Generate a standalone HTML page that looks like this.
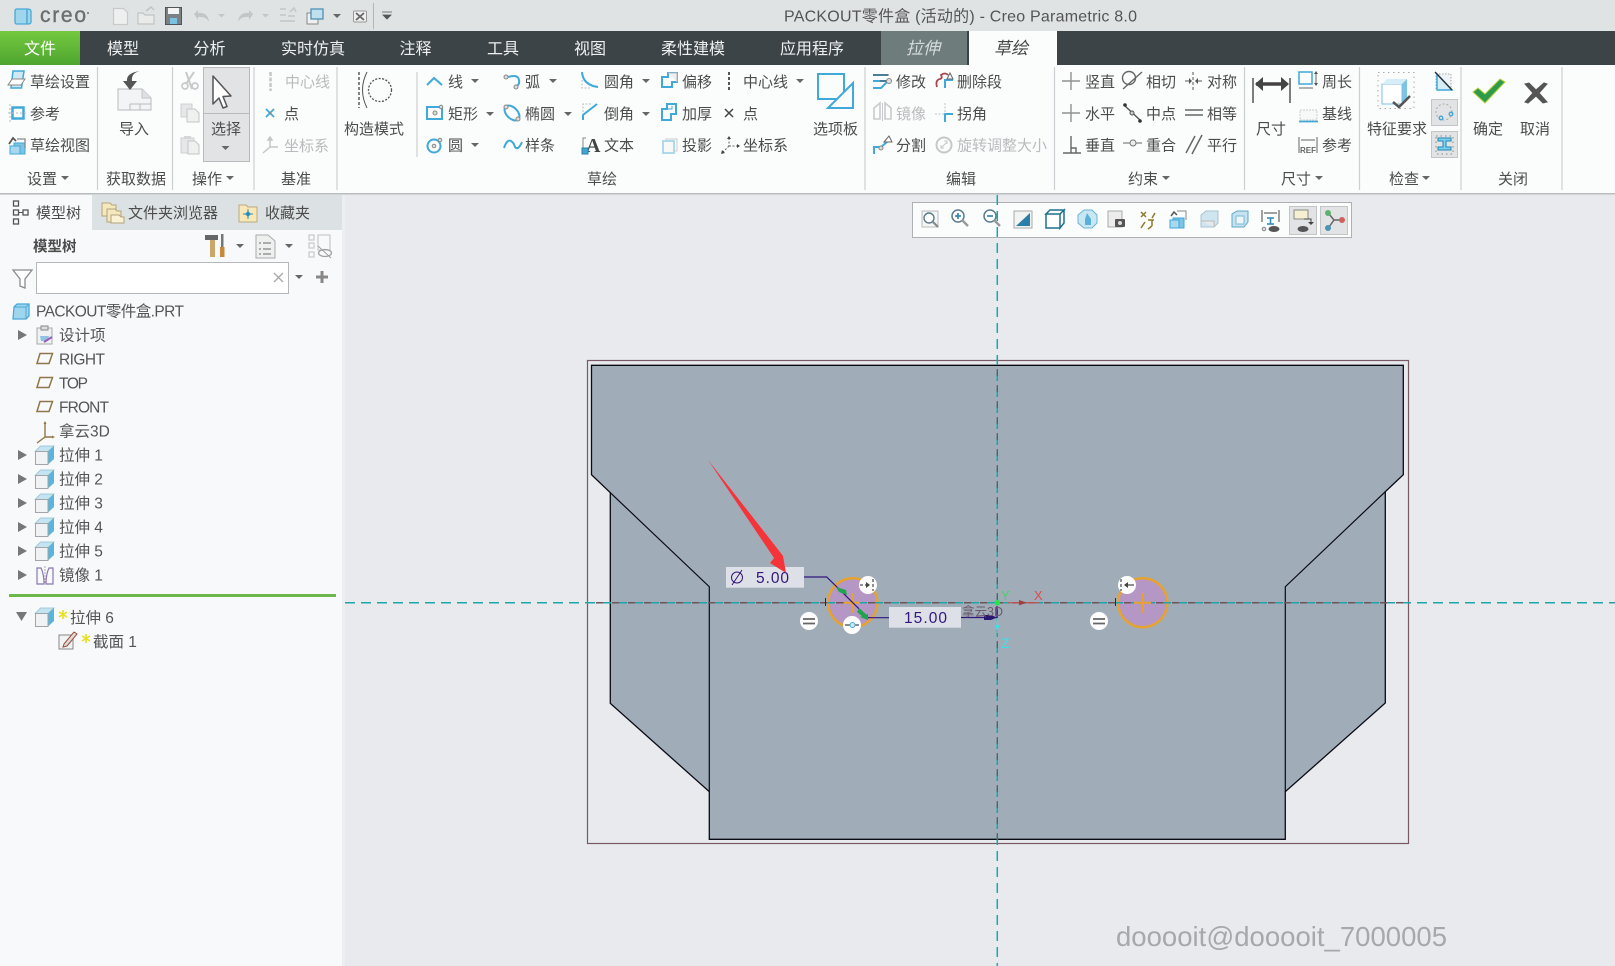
<!DOCTYPE html>
<html lang="zh"><head><meta charset="utf-8"><title>PACKOUT零件盒 (活动的) - Creo Parametric 8.0</title>
<style>
html,body{margin:0;padding:0;width:1615px;height:966px;overflow:hidden;background:#e8eaee}
svg{display:block}
text{font-family:"Liberation Sans","Noto Sans CJK SC",sans-serif;font-size:15px;fill:#4c4c4c}
.g{fill:#b9bcbd}
.tab{font-size:16px;fill:#eef0f0}
.tr{font-size:15.5px;fill:#555}
.dim{font-family:"Liberation Sans",sans-serif;font-size:15.5px;fill:#34157e}
.b{fill:none;stroke:#41a9d9;stroke-width:2}
.k{fill:none;stroke:#666;stroke-width:1.4}
.l{fill:none;stroke:#c4c6c7;stroke-width:1.4}
</style></head><body>
<svg xmlns="http://www.w3.org/2000/svg" width="1615" height="966" viewBox="0 0 1615 966">
<defs>
<linearGradient id="gr" x1="0" y1="0" x2="0" y2="1"><stop offset="0" stop-color="#74c93f"/><stop offset="1" stop-color="#4ea52f"/></linearGradient>
<g id="cube"><path d="M0 5.5L5.500 0H19L13 5.500Z" fill="#c4e4f1" stroke="#8fbcd0" stroke-width=".7"/><path d="M13 5.500L19 0V13L13 18.500Z" fill="#5ab4dc"/><rect x=".5" y="5.500" width="12.500" height="13" fill="#f1f2f3" stroke="#a2a4a6"/></g>
<path id="plane" d="M2 10.500L5 .5H17.500L14 10.500Z" fill="none" stroke="#8f7748" stroke-width="1.500"/>
</defs>

<!-- backgrounds -->
<rect width="1615" height="966" fill="#e8eaee"/>
<rect width="1615" height="31" fill="#dfe3e3"/>
<rect y="31" width="1615" height="34" fill="#3c4447"/>
<rect y="31" width="80" height="34" fill="url(#gr)"/>
<rect x="881" y="31" width="86" height="34" fill="#6f7c7c"/>
<rect x="969" y="31" width="88" height="34" fill="#fbfcfc"/>
<rect y="65" width="1615" height="128" fill="#fbfcfc"/>
<rect y="193" width="1615" height="1.500" fill="#b9bdbf"/>

<!-- title bar -->
<path d="M17 9h11q3 0 3 3v10q0 2-3 2H17q-2 0-2-2V11q0-2 2-2z" fill="#9fd6ee" stroke="#4aa9d6" stroke-width="1.300"/>
<path d="M27 9v15" stroke="#4aa9d6" stroke-width="1.500"/>
<text x="40" y="22" style="font-size:21px;fill:#6a7072;stroke:#6a7072;stroke-width:.4" textLength="46">creo</text>
<circle cx="88" cy="13" r="1" fill="#6a7072"/>
<path d="M113.500 8.500h10l4 4v12h-14z" fill="#eef0f0" stroke="#c7c9ca" stroke-width="1.200"/>
<path d="M138 13h5l2 2h9v9h-16z" fill="#e9ebeb" stroke="#c2c4c4" stroke-width="1.200"/><path d="M146 11l5-4 3 3" fill="none" stroke="#c2c4c4" stroke-width="1.500"/>
<rect x="165.500" y="7.500" width="16" height="17" fill="#7a8084" stroke="#4f5558"/><rect x="168" y="8" width="11" height="6" fill="#f4f4f4"/><rect x="170" y="18" width="7" height="6" fill="#7cc0e2"/>
<path d="M194 14l4-4v3q10-1 11 9q-3-6-11-5v3z" fill="#c3c6c7"/>
<path d="M253 14l-4-4v3q-10-1-11 9q3-6 11-5v3z" fill="#c3c6c7"/>
<path d="M280 9h6M280 15h6M280 21h15M290 12l4-4 2 4M288 16h7" stroke="#c7cacb" stroke-width="1.700" fill="none"/>
<rect x="307" y="13" width="11" height="11" fill="#eef0f0" stroke="#888"/><rect x="311" y="9" width="12" height="10" fill="#bfe0ef" stroke="#4f91b4" stroke-width="1.300"/>
<rect x="353.500" y="11" width="13" height="11" rx="1" fill="#eee" stroke="#999"/><path d="M356 13l8 7M364 13l-8 7" stroke="#666" stroke-width="1.800"/>
<path d="M373.500 3v26" stroke="#b3b6b7"/>
<path d="M382 12h10M383 15h8l-4 4z" fill="#555" stroke="#555" stroke-width=".8"/>
<path d="M218 14h7l-3.500 3.500zM262 14h7l-3.500 3.500z" fill="#c4c6c7"/><path d="M333 14h8l-4 4z" fill="#666"/>
<text x="784" y="21.500" style="font-size:16px;fill:#555" textLength="353">PACKOUT零件盒 (活动的) - Creo Parametric 8.0</text>

<!-- tab labels -->
<text class="tab" x="24" y="54" style="fill:#fff">文件</text>
<text class="tab" x="107" y="54">模型</text><text class="tab" x="193.500" y="54">分析</text>
<text class="tab" x="281" y="54">实时仿真</text><text class="tab" x="399.500" y="54">注释</text>
<text class="tab" x="487" y="54">工具</text><text class="tab" x="574" y="54">视图</text>
<text class="tab" x="661" y="54">柔性建模</text><text class="tab" x="780" y="54">应用程序</text>
<text class="tab" x="906" y="54" style="font-size:17px;font-style:italic;fill:#d5dbdb">拉伸</text>
<text class="tab" x="994" y="54" style="font-size:17px;font-style:italic;fill:#444">草绘</text>

<!-- ribbon separators -->
<path d="M97.500 67v123M172.500 67v123M254 67v123M337 67v123M417 72v85M865 67v123M1054.500 67v123M1244.500 67v123M1359.500 67v123M1461 67v123M1562 67v123" stroke="#cdd0d2" stroke-width="1.200"/>
<rect x="203.500" y="67.500" width="46" height="94" fill="#e2e3e4" stroke="#b8babb"/><path d="M204 113.500h45" stroke="#b8babb"/>

<!-- ribbon text -->
<text x="30" y="87">草绘设置</text><text x="30" y="119">参考</text><text x="30" y="150.500">草绘视图</text><text x="27" y="184">设置</text>
<text x="119" y="134">导入</text><text x="106" y="184">获取数据</text>
<text x="211" y="134">选择</text><text x="192" y="184">操作</text>
<text class="g" x="285" y="87">中心线</text><text x="284" y="119">点</text><text class="g" x="284" y="151">坐标系</text><text x="281" y="184">基准</text>
<text x="344" y="134">构造模式</text>
<text x="448" y="87">线</text><text x="448" y="119">矩形</text><text x="448" y="150.500">圆</text>
<text x="525" y="87">弧</text><text x="525" y="119">椭圆</text><text x="525" y="150.500">样条</text>
<text x="604" y="87">圆角</text><text x="604" y="119">倒角</text><text x="604" y="150.500">文本</text>
<text x="682" y="87">偏移</text><text x="682" y="119">加厚</text><text x="682" y="150.500">投影</text>
<text x="743" y="87">中心线</text><text x="743" y="119">点</text><text x="743" y="150.500">坐标系</text>
<text x="587" y="184">草绘</text><text x="813" y="134">选项板</text>
<text x="896" y="87">修改</text><text class="g" x="896" y="119">镜像</text><text x="896" y="150.500">分割</text>
<text x="957" y="87">删除段</text><text x="957" y="119">拐角</text><text class="g" x="957" y="150.500">旋转调整大小</text><text x="946" y="184">编辑</text>
<text x="1085" y="87">竖直</text><text x="1085" y="119">水平</text><text x="1085" y="150.500">垂直</text>
<text x="1146" y="87">相切</text><text x="1146" y="119">中点</text><text x="1146" y="150.500">重合</text>
<text x="1207" y="87">对称</text><text x="1207" y="119">相等</text><text x="1207" y="150.500">平行</text><text x="1128" y="184">约束</text>
<text x="1256" y="134">尺寸</text><text x="1322" y="87">周长</text><text x="1322" y="119">基线</text><text x="1322" y="150.500">参考</text><text x="1281" y="184">尺寸</text>
<text x="1367" y="134">特征要求</text><text x="1389" y="184">检查</text>
<text x="1473" y="134">确定</text><text x="1520" y="134">取消</text><text x="1498" y="184">关闭</text>

<!-- ribbon dropdown arrows -->
<path d="M61 176h8l-4 4zM221.500 146h8l-4 4zM226 176h8l-4 4zM471 79h8l-4 4zM486 112h8l-4 4zM471 143h8l-4 4zM549 79h8l-4 4zM564 112h8l-4 4zM642 79h8l-4 4zM642 112h8l-4 4zM796 79h8l-4 4zM1162 176h8l-4 4zM1315 176h8l-4 4zM1422 176h8l-4 4z" fill="#666"/>

<!-- settings icons -->
<path d="M13 71h11l-2.500 17H11z" fill="#cfe9f4" stroke="#41a9d9" stroke-width="1.500"/>
<path d="M8 85l4-6h13l-4 6z" fill="#fff" stroke="#888"/>
<rect x="12.500" y="107.500" width="11" height="11" fill="none" stroke="#41a9d9" stroke-width="2.500"/>
<path d="M8 113h18M10 104v18" stroke="#bbb" stroke-dasharray="2 2"/>
<rect x="14" y="143" width="11" height="11" fill="#7cc4e4" stroke="#41a9d9"/><rect x="10" y="146" width="10" height="8" fill="#a8d8ee" stroke="#41a9d9"/>
<path d="M17 139h8v9" fill="none" stroke="#888" stroke-width="1.300"/><path d="M9 144l4-6 3 3" fill="none" stroke="#555" stroke-width="1.700"/>

<!-- import -->
<path d="M118 89h24l9 9v12h-33z" fill="#f2f4f5" stroke="#c3c6c8" stroke-width="1.200"/><path d="M142 89v9h9" fill="#dde0e2" stroke="#c3c6c8"/>
<path d="M130 104h21M130 104v6M140 104v6" stroke="#bbb"/>
<path d="M140 71q-9 2-8 10h5l-7 9-7-9h4q-1-8 13-10z" fill="#555"/>

<!-- clipboard -->
<path d="M186 72l6 17M194 72l-8 12" stroke="#c8c9ca" stroke-width="2"/><circle cx="185" cy="86" r="3" fill="none" stroke="#c8c9ca" stroke-width="1.700"/><circle cx="195" cy="86" r="3" fill="none" stroke="#c8c9ca" stroke-width="1.700"/>
<rect x="181" y="104" width="11" height="13" fill="#e6e7e8" stroke="#cfd0d1"/><path d="M187 109h8l4 4v9h-12z" fill="#eff0f0" stroke="#c4c5c6"/>
<rect x="181" y="138" width="13" height="15" fill="#e6e7e8" stroke="#cfd0d1"/><rect x="184" y="136" width="7" height="3" fill="#d5d6d7"/><path d="M188 141h7l4 4v9h-11z" fill="#eff0f0" stroke="#c4c5c6"/>
<path d="M213 76l18 20-8 .5 4 10-4 1.500-4-10-6 6z" fill="#fff" stroke="#555" stroke-width="1.500" stroke-linejoin="round"/>

<!-- datum -->
<path d="M270.500 72v19" stroke="#c4c6c7" stroke-width="2.500" stroke-dasharray="4 1.500"/>
<path d="M266 109l8 8M274 109l-8 8" stroke="#41a9d9" stroke-width="1.800"/><circle cx="270" cy="113" r="1.200" fill="#888"/>
<path d="M270 137v10l-7 6M270 147h8M270 137l-2 3h4z" class="l"/>

<!-- construct -->
<path d="M359 72v36" stroke="#444" stroke-dasharray="3 2" stroke-width="1.300"/>
<path d="M367 72q-9 18 0 36" stroke="#555" fill="none"/>
<circle cx="380" cy="90" r="11.500" fill="none" stroke="#555" stroke-dasharray="2 1.500" stroke-width="1.300"/>

<!-- sketch group -->
<path d="M427 85l7-7 8 7" class="b" stroke-width="2.800"/>
<rect x="427" y="107" width="15" height="12" class="b" stroke-width="2.600"/><circle cx="435" cy="113" r="2" fill="#ddd" stroke="#888"/><circle cx="441" cy="107" r="1.700" fill="#ddd" stroke="#888"/>
<circle cx="434" cy="146" r="6.500" class="b" stroke-width="2.600"/><circle cx="434" cy="146" r="1.800" fill="#ddd" stroke="#888"/><circle cx="440" cy="140" r="1.800" fill="#ddd" stroke="#888"/>
<path d="M508 77q10-3 11 3 1 4-3 7" class="b" stroke-width="2.600"/><circle cx="506" cy="77" r="2" fill="#ddd" stroke="#888"/><circle cx="516" cy="87" r="2" fill="#ddd" stroke="#888"/>
<ellipse cx="512" cy="113" rx="9" ry="5.500" transform="rotate(45 512 113)" class="b" stroke-width="2.600"/><circle cx="506" cy="107" r="2" fill="#ddd" stroke="#888"/><circle cx="518" cy="119" r="2" fill="#ddd" stroke="#888"/>
<path d="M504 148q3-9 7-7 3 2 4 6 3 4 7-5" class="b" stroke-width="2.800"/>
<path d="M582 72q1 13 16 15" class="b" stroke-width="2.400"/><path d="M582 80v8h8" stroke="#bbb" stroke-dasharray="2 1.500" fill="none"/>
<path d="M583 120v-5l14-11" class="b" stroke-width="2.400"/><path d="M583 112v-8h8" stroke="#bbb" stroke-dasharray="2 1.500" fill="none"/>
<text x="586" y="152" style="font-family:'Liberation Serif',serif;font-size:20px;font-weight:bold;fill:#444">A</text><path d="M586 138h-3v10" stroke="#888" fill="none"/><rect x="582" y="148" width="6" height="6" fill="#3fa7d6" stroke="#2a7fa8"/>
<path d="M662 87V77h6v-4h9v9h-5v5z" class="b" stroke-width="1.800"/><path d="M668 73h9v9" stroke="#bbb" fill="#eee"/>
<path d="M662 120v-11h5v-5h9v10h-5v6z" class="b" stroke-width="1.800"/><path d="M667 109h5v-3" stroke="#41a9d9" fill="none"/>
<rect x="663" y="141" width="11" height="12" fill="#f7f8f8" stroke="#9bd1ea" stroke-width="1.600"/><path d="M666 141v-2h11v12h-3" stroke="#ccc" fill="none"/>
<path d="M729 72v18" stroke="#444" stroke-width="1.800" stroke-dasharray="3 2"/>
<path d="M725 109l8 8M733 109l-8 8" stroke="#444" stroke-width="1.500"/>
<path d="M729 138v8M729 146h8M729 146l-6 6" stroke="#666" stroke-dasharray="2 1.500" fill="none"/><path d="M727 139l2-3 2 3zM737 144l3 2-3 2zM722 150l-1 4 4-1z" fill="#444"/>
<path d="M818 74h26v25h-26z" fill="none" stroke="#41a9d9" stroke-width="2"/><path d="M828 108l25-25v25z" fill="#fbfcfc" stroke="#41a9d9" stroke-width="2"/>

<!-- edit group -->
<path d="M873 75h15M873 81h15M873 88h8l6-6" class="b" stroke-width="1.600"/><path d="M873 75h16M880 81h10" stroke="#555"/><circle cx="889" cy="81" r="2.500" fill="#ddd" stroke="#888"/>
<path d="M874 108l6-5v16h-6zM891 108l-6-5v16h6z" fill="none" stroke="#c9cbcc" stroke-width="1.600"/><path d="M882.500 103v18" stroke="#c9cbcc"/>
<path d="M874 154v-7h7l6-5" class="b" stroke-width="1.800"/><path d="M884 142l5-6 3 6z" fill="#fff" stroke="#666"/><circle cx="881" cy="148" r="2" fill="#ddd" stroke="#888"/>
<path d="M945 88v-8h8" class="b" stroke-width="2"/><path d="M937 87q-2-7 3-8 3-1 1-4 4-3 7 0" fill="none" stroke="#a9484b" stroke-width="1.800"/><path d="M947 79l3-6 3 6z" fill="#fff" stroke="#666"/>
<path d="M945 122v-8h8" class="b" stroke-width="2"/><path d="M945 103v11M935 114h10" stroke="#c1c1c1" stroke-dasharray="2 1.500"/>
<circle cx="944" cy="145" r="7.500" fill="none" stroke="#c6c8c9" stroke-width="2"/><path d="M941 148l6-6M944 141h3v3M941 145v3h3" stroke="#c6c8c9" fill="none"/>

<!-- constraints -->
<path d="M1062 81h18M1071 72v18" stroke="#8f9192" stroke-width="1.400"/>
<path d="M1062 113h18M1071 104v18" stroke="#8f9192" stroke-width="1.400"/>
<path d="M1063 153h18M1071 136v17M1071 148h5v5" stroke="#666" stroke-width="1.400" fill="none"/>
<circle cx="1129" cy="78" r="6.500" class="k"/><path d="M1123 89l19-17" class="k"/>
<path d="M1124 105l17 16" stroke="#555" stroke-width="1.500"/><circle cx="1125" cy="105" r="1.800" fill="#333"/><circle cx="1132" cy="113" r="2" fill="#ccc" stroke="#555"/><circle cx="1140" cy="121" r="1.800" fill="#333"/>
<path d="M1123 143h19" stroke="#666"/><circle cx="1133" cy="143" r="3" fill="#eee" stroke="#777"/>
<path d="M1193 72v18" stroke="#555" stroke-dasharray="3 2"/><path d="M1185 81h5M1197 81h5" stroke="#555"/><path d="M1189 78l3 3-3 3zM1198 78l-3 3 3 3z" fill="#555"/>
<path d="M1185 110h18M1185 115h18" stroke="#666" stroke-width="1.500"/>
<path d="M1186 153l9-17M1192 154l10-19" stroke="#666" stroke-width="1.500"/>

<!-- dimension -->
<path d="M1253 78v25M1290 78v25" stroke="#555" stroke-width="1.500"/>
<path d="M1256 84h31" stroke="#444" stroke-width="3.500"/><path d="M1255 84l8-7v14zM1289 84l-8-7v14z" fill="#444"/>
<rect x="1299" y="72" width="13" height="12" fill="none" stroke="#41a9d9" stroke-width="1.500"/><path d="M1316 73v11M1299 88h14" stroke="#666"/><path d="M1314 74h4l-2-3zM1314 83h4l-2 3z" fill="#555"/>
<rect x="1300" y="110" width="17" height="10" fill="#f7f8f8" stroke="#ccc" stroke-dasharray="2 1"/><path d="M1299 121.500h19" stroke="#41a9d9" stroke-width="1.800"/>
<path d="M1299 137v16M1317 137v16M1301 140h14" stroke="#666"/><text x="1300" y="153" style="font-size:8px;font-weight:bold;fill:#666">REF</text>

<!-- inspect -->
<rect x="1378" y="72.500" width="36" height="36" fill="none" stroke="#aaa" stroke-dasharray="1.500 3.500"/>
<path d="M1382 84h20v20h-20z" fill="#fff" stroke="#7bbfe0"/><path d="M1382 84l5-5h20l-5 5z" fill="#d7eef8"/><path d="M1402 84l5-5v20l-5 5z" fill="#7cc4e4"/>
<path d="M1393 102l6 5 11-11" fill="none" stroke="#555" stroke-width="2.500"/>
<rect x="1436" y="74" width="15" height="15" fill="#eef4f8" stroke="#aaa" stroke-dasharray="1.500 1.500"/><path d="M1437 74l15 16h-15z" fill="#d6edf8" stroke="#41a9d9" stroke-width="1.500"/><path d="M1435 72l17 18" stroke="#333" stroke-width="1.400"/>
<rect x="1431.500" y="99.500" width="26" height="26" fill="#e2e3e4" stroke="#c4c5c6"/><circle cx="1444" cy="112" r="8" fill="none" stroke="#aaa" stroke-dasharray="2 2"/><circle cx="1441" cy="118" r="1.800" fill="none" stroke="#3fa7d6" stroke-width="1.300"/><circle cx="1451" cy="114" r="1.800" fill="none" stroke="#3fa7d6" stroke-width="1.300"/>
<rect x="1431.500" y="131.500" width="26" height="26" fill="#e2e3e4" stroke="#c4c5c6"/><path d="M1438 138h13v3h-5v6h5v3h-13v-3h5v-6h-5z" fill="#7fd0ee" stroke="#1c86b4"/><path d="M1436 136h17v18h-17z" fill="none" stroke="#888" stroke-dasharray="1.500 3"/>

<!-- close -->
<path d="M1473 92l5-4 7 6 15-15 5 3-20 21z" fill="#2f9a4a" stroke="#b8d33c" stroke-width="1"/>
<path d="M1525 84l4-1 7 7 8-7 3 1-8 9 8 9-4 1-7-7-8 7-3-1 8-9z" fill="#555" stroke="#555"/>

<!-- view toolbar -->
<rect x="912.500" y="202.500" width="439" height="35" fill="#fbfcfc" stroke="#aeb1b3"/>
<rect x="1289.500" y="206.500" width="27" height="28" fill="#e2e3e4" stroke="#c4c5c6"/><rect x="1320.500" y="206.500" width="27" height="28" fill="#e2e3e4" stroke="#c4c5c6"/>
<rect x="922" y="211" width="16" height="16" fill="#f5f6f6" stroke="#bbb"/><circle cx="929" cy="218" r="5" fill="#fff" stroke="#5a7c8c" stroke-width="1.400"/><path d="M933 222l5 5" stroke="#888" stroke-width="2.200"/>
<circle cx="958" cy="216" r="6" fill="#fff" stroke="#5a7c8c" stroke-width="1.500"/><path d="M955 216h6M958 213v6" stroke="#2a7fa8" stroke-width="1.600"/><path d="M962 220l6 6" stroke="#999" stroke-width="2.400"/>
<circle cx="990" cy="216" r="6" fill="#fff" stroke="#5a7c8c" stroke-width="1.500"/><path d="M987 216h6" stroke="#2a7fa8" stroke-width="1.600"/><path d="M994 220l6 6" stroke="#999" stroke-width="2.400"/>
<rect x="1014" y="211" width="18" height="17" fill="#f2f3f3" stroke="#aaa"/><path d="M1016 226l14-13v13z" fill="#2a7fa8"/>
<path d="M1046 214h14v14h-14zM1046 214l4-4h14l-4 4zM1060 214l4-4v13l-4 5z" fill="#fff" stroke="#1f6f8f" stroke-width="1.500"/>
<path d="M1078 215l6-5h8l5 5v8l-5 5h-8l-6-5z" fill="#c9e7f3" stroke="#6bb4d4"/><path d="M1087 213l4 6v6h-6v-6z" fill="#5ab0d8"/>
<rect x="1108" y="211" width="14" height="16" fill="#ececec" stroke="#aaa"/><rect x="1115" y="219" width="10" height="8" rx="1" fill="#555"/><circle cx="1120" cy="223" r="2" fill="#ddd"/>
<path d="M1141 212l5 5M1146 212l-5 5M1155 213l-3 5M1148 220l6 0M1152 220v6M1152 226l-4 3M1141 228l4-6" stroke="#8f7a2a" stroke-width="1.500" fill="none"/>
<rect x="1173" y="218" width="11" height="10" fill="#7cc4e4" stroke="#41a9d9"/><rect x="1170" y="220" width="9" height="8" fill="#a8d8ee" stroke="#41a9d9"/><path d="M1177 211h9v9" fill="none" stroke="#888"/><path d="M1171 216l3-4 3 3" fill="none" stroke="#555" stroke-width="1.500"/>
<path d="M1201 215l5-4h12v12l-4 4h-13z" fill="#cfe6f0" stroke="#a8c4d0"/><path d="M1201 221h13v6" fill="#e8eaea" stroke="#bbb"/>
<path d="M1232 214l5-3h11v11l-4 5h-12z" fill="#c4e2ef" stroke="#5fa8c8"/><path d="M1236 216h8v8h-8z" fill="#eef6f9" stroke="#7dbbd4"/>
<path d="M1262 210v12M1279 210v12M1264 213h13" stroke="#444"/><path d="M1267 218h7M1270.500 218v6M1267 224h7" stroke="#2a8ab8" stroke-width="1.500"/><ellipse cx="1274" cy="229" rx="5.500" ry="3" fill="#555"/><circle cx="1264" cy="229" r="1.800" fill="#ddd" stroke="#888"/>
<rect x="1294" y="210" width="14" height="9" fill="#f6f0d2" stroke="#888"/><path d="M1304 219h7v5" fill="none" stroke="#444"/><path d="M1308 222l3 3 3-3z" fill="#444"/><ellipse cx="1303" cy="229" rx="5.500" ry="3" fill="#555"/>
<path d="M1334 220l-5-6M1334 220l-5 7M1334 220h8" stroke="#666" stroke-width="1.500"/><circle cx="1328" cy="213" r="3" fill="#5fb06c"/><circle cx="1328" cy="228" r="3" fill="#4b93b6"/><circle cx="1342" cy="220" r="3" fill="#d0605a"/>

<!-- left panel -->
<rect y="195" width="342" height="771" fill="#f7f9fa"/>
<rect x="92" y="195" width="250" height="35" fill="#dce2e3"/>
<rect x="342" y="195" width="3" height="771" fill="#eceef1"/>
<rect x="13.500" y="201" width="5" height="5" fill="none" stroke="#555" stroke-width="1.300"/><rect x="13.500" y="210" width="5" height="5" fill="none" stroke="#555" stroke-width="1.300"/><rect x="13.500" y="219" width="5" height="5" fill="none" stroke="#555" stroke-width="1.300"/><rect x="23" y="210" width="5" height="5" fill="none" stroke="#555" stroke-width="1.300"/><path d="M19 212.500h4" stroke="#555"/>
<text x="36" y="218">模型树</text>
<path d="M102 203h8l2 2h4v11h-14z" fill="#f6e7bd" stroke="#b2a47a"/><path d="M107 209h8l2 2h4v11h-14z" fill="#f6e7bd" stroke="#b2a47a"/><path d="M111 215h8l2 2h3v6h-13z" fill="#fbf2d6" stroke="#b2a47a"/>
<text x="128" y="218">文件夹浏览器</text>
<path d="M239 205h7l2 2h9v15h-18z" fill="#f8e8b8" stroke="#b9a97c"/><path d="M245 214l3-3 3 3-3 3z" fill="#2a8fb8"/><path d="M248 209v10M243 214h10" stroke="#2a8fb8"/>
<text x="265" y="218">收藏夹</text>
<text x="33" y="251.500" style="font-weight:bold;font-size:14.500px">模型树</text>
<path d="M205 235h13v5h-13z" fill="#666"/><rect x="210" y="240" width="5" height="17" fill="#c9a66a"/><rect x="221" y="234" width="2.500" height="13" fill="#777"/><rect x="220" y="247" width="4.500" height="10" fill="#c6893a"/>
<path d="M236 244h8l-4 4zM285 244h8l-4 4zM295 275h8l-4 4z" fill="#666"/>
<path d="M256 235h12l7 6v17h-19z" fill="#eef0f0" stroke="#aaa"/><path d="M259 243h2M263 243h8M259 249h2M263 249h8M259 254h2M263 254h8" stroke="#666"/>
<path d="M309 235h5v5h-5zM309 243h5v5h-5zM309 252h5v5h-5zM318 235h12v15h-12z" fill="none" stroke="#c9cbcc" stroke-width="1.300"/><ellipse cx="325" cy="253" rx="6.500" ry="3.500" fill="none" stroke="#9ea0a1" stroke-width="1.300"/><path d="M318 246l13 12" stroke="#9ea0a1"/>
<path d="M13 270h19l-7 9v9l-5-2v-7z" fill="#fff" stroke="#8a8c8d" stroke-width="1.300"/>
<rect x="36.500" y="262.500" width="252" height="31" fill="#fff" stroke="#b5b7b8"/>
<path d="M274 273l9 9M283 273l-9 9" stroke="#aaa" stroke-width="1.400"/>
<path d="M316 277h12M322 271v12" stroke="#888" stroke-width="3"/>

<path d="M14 307l3-3h12v12l-3 3H13z" fill="#9fd6ee" stroke="#4aa9d6" stroke-width="1.300"/><path d="M14 307h12v12M26 307l3-3" fill="none" stroke="#4aa9d6"/>
<text class="tr" x="36" y="316.500" textLength="148">PACKOUT零件盒.PRT</text>

<path d="M18 330l9 5-9 5zM18 450l9 5-9 5zM18 474l9 5-9 5zM18 498l9 5-9 5zM18 522l9 5-9 5zM18 546l9 5-9 5zM18 570l9 5-9 5z" fill="#777"/>
<path d="M16 612h11l-5.500 9z" fill="#777"/>

<rect x="37" y="328" width="15" height="16" fill="#f0f1f2" stroke="#aaa"/><rect x="41" y="326" width="7" height="4" fill="#ddd" stroke="#888"/><path d="M40 336h9l-1 5h-7z" fill="#8fc4e0"/><path d="M44 342l8-5" stroke="#9a5ac0" stroke-width="2"/>
<text class="tr" x="59" y="340.500">设计项</text>
<use href="#plane" x="35" y="353"/><text class="tr" x="59" y="364.500" textLength="46">RIGHT</text>
<use href="#plane" x="35" y="377"/><text class="tr" x="59" y="388.500" textLength="29">TOP</text>
<use href="#plane" x="35" y="401"/><text class="tr" x="59" y="412.500" textLength="50">FRONT</text>
<path d="M45 422v15M45 437h8M45 437l-8 6" fill="none" stroke="#8f7748" stroke-width="1.400"/><path d="M43.500 424l1.500-3 1.500 3zM52 435.500l3 1.500-3 1.500z" fill="#8f7748"/>
<text class="tr" x="59" y="436.500">拿云3D</text>
<use href="#cube" x="35" y="446"/><text class="tr" x="59" y="460.500">拉伸 1</text>
<use href="#cube" x="35" y="470"/><text class="tr" x="59" y="484.500">拉伸 2</text>
<use href="#cube" x="35" y="494"/><text class="tr" x="59" y="508.500">拉伸 3</text>
<use href="#cube" x="35" y="518"/><text class="tr" x="59" y="532.500">拉伸 4</text>
<use href="#cube" x="35" y="542"/><text class="tr" x="59" y="556.500">拉伸 5</text>
<path d="M37 568h4q3 6 3 16h-7zM53 568h-4q-3 6-3 16h7z" fill="none" stroke="#8a76b4" stroke-width="1.200"/><path d="M45 566v18" stroke="#aaa" stroke-dasharray="2 1"/>
<text class="tr" x="59" y="580.500">镜像 1</text>
<rect x="9" y="594" width="327" height="3" fill="#6cb84a"/>
<use href="#cube" x="35" y="608"/>
<path d="M63 610v9M59 612l8 5M67 612l-8 5" stroke="#e8e020" stroke-width="1.600"/>
<text class="tr" x="70" y="623">拉伸 6</text>
<rect x="59" y="635" width="14" height="14" fill="#f2f3f3" stroke="#888"/><path d="M64 644l10-12 3 2-10 12-4 1z" fill="#ddd" stroke="#a04a3a"/>
<path d="M86 634v9M82 636l8 5M90 636l-8 5" stroke="#e8e020" stroke-width="1.600"/>
<text class="tr" x="93" y="647">截面 1</text>

<!-- sketch -->
<rect x="587.500" y="360.500" width="821" height="483" fill="none" stroke="#7a5a62" stroke-width="1.200"/>
<path d="M591.500 365.300H1403.300V474.700L1385.300 491.700V703L1285.300 791.700V839.300H709.300V791.700L610.300 703.300V492.700L591.500 474.700Z" fill="#a0adb9" stroke="#0a0a14" stroke-width="1.300"/>
<path d="M610.300 492.700L709.300 586.700V791.700M1385.300 491.700L1285.300 586.700V791.700" fill="none" stroke="#0a0a14" stroke-width="1.200"/>

<circle cx="852.700" cy="602.700" r="24.500" fill="#b497c4" stroke="#e8a22e" stroke-width="2.500"/>
<circle cx="1142.700" cy="602.700" r="24.500" fill="#b497c4" stroke="#e8a22e" stroke-width="2.500"/>

<!-- axes -->
<path d="M345 602.700H1615" stroke="#1ea5a8" stroke-width="1.500" stroke-dasharray="10 6"/>
<path d="M587 602.700H1408" stroke="#6d5458" stroke-width="1.500" stroke-dasharray="7 9" stroke-dashoffset="-9"/>
<path d="M997.300 195V966" stroke="#1ea5a8" stroke-width="1.500" stroke-dasharray="10 6"/>
<path d="M997.300 360V844" stroke="#6d5458" stroke-width="1.200" stroke-dasharray="7 9" stroke-dashoffset="-9"/>

<path d="M844 602.700h16M852.700 593v20M1134 602.700h17M1142.700 593v20" stroke="#e8a22e" stroke-width="2"/>
<path d="M825.500 598v8M1115.500 598v8" stroke="#2b1880" stroke-width="1"/>

<!-- dims -->
<path d="M804 577h22.700L868 617.700M868 617.700h21M961 617.500h36M852.500 618v8M997 606v12" fill="none" stroke="#34157e" stroke-width="1.200"/>
<path d="M836 587l10 3 1 5-8-3zM859 608l9 8-5 1-6-5zM860 617l8-3v6z" fill="#1fa54a"/>
<path d="M984 615h7l6 2.500-6 2.500h-7z" fill="#2a1770"/>
<rect x="726" y="567" width="78" height="20.700" fill="#dde0e6"/>
<rect x="889" y="607" width="72" height="20.700" fill="#dde0e6"/>
<circle cx="737" cy="577.500" r="5.500" fill="none" stroke="#34157e"/><path d="M732 585l10-15" stroke="#34157e"/>
<text class="dim" x="756" y="583" textLength="33">5.00</text>
<text class="dim" x="904" y="623" textLength="43">15.00</text>

<path d="M708 460L780 552L783 556L786 573L770 563L774 558Z" fill="#f5343a"/>

<text x="962" y="616" style="font-size:12.500px;fill:#6e5a6c">拿云3D</text>
<circle cx="997.300" cy="602.700" r="2.800" fill="#22e64a"/>
<path d="M1008 602.700h32" stroke="#e04a4a"/><path d="M1019 600l8 2.700-8 2.700z" fill="#a04040"/>
<text x="1034" y="600" style="font-size:13px;fill:#e04a4a">X</text>
<text x="1001" y="600" style="font-size:13px;fill:#4ad06a">Y</text>
<text x="1001" y="648" style="font-size:14px;fill:#3ee0e8">Z</text>
<path d="M997.300 618v15" stroke="#3ee0e8"/><path d="M995 625l2.300 6 2.300-6z" fill="#3ee0e8"/>

<!-- constraint badges -->
<g fill="#fdfdfd">
<circle cx="868" cy="585" r="9"/><circle cx="852" cy="625" r="9"/><circle cx="809" cy="621" r="9"/><circle cx="1127" cy="585" r="9"/><circle cx="1099" cy="621" r="9"/>
</g>
<path d="M860 585h8M873 579v12" stroke="#555" stroke-width="1.300" stroke-dasharray="3 2" fill="none"/><path d="M866 582l4 3-4 3z" fill="#444"/>
<path d="M1121 579v12" stroke="#555" stroke-width="1.300" stroke-dasharray="3 2"/><path d="M1125 585h9" stroke="#555" stroke-width="1.300"/><path d="M1128 582l-4 3 4 3z" fill="#444"/>
<path d="M845 625h14" stroke="#666" stroke-width="1.500"/><circle cx="852.500" cy="625" r="2.500" fill="#d0e8f4" stroke="#4aa9d6"/>
<path d="M803 619h12M803 623.500h12M1093 619h12M1093 623.500h12" stroke="#666" stroke-width="1.800"/>

<text x="1116" y="946" style="font-size:27.500px;fill:#a6a8ab" textLength="331">dooooit@dooooit_7000005</text>
</svg>
</body></html>
